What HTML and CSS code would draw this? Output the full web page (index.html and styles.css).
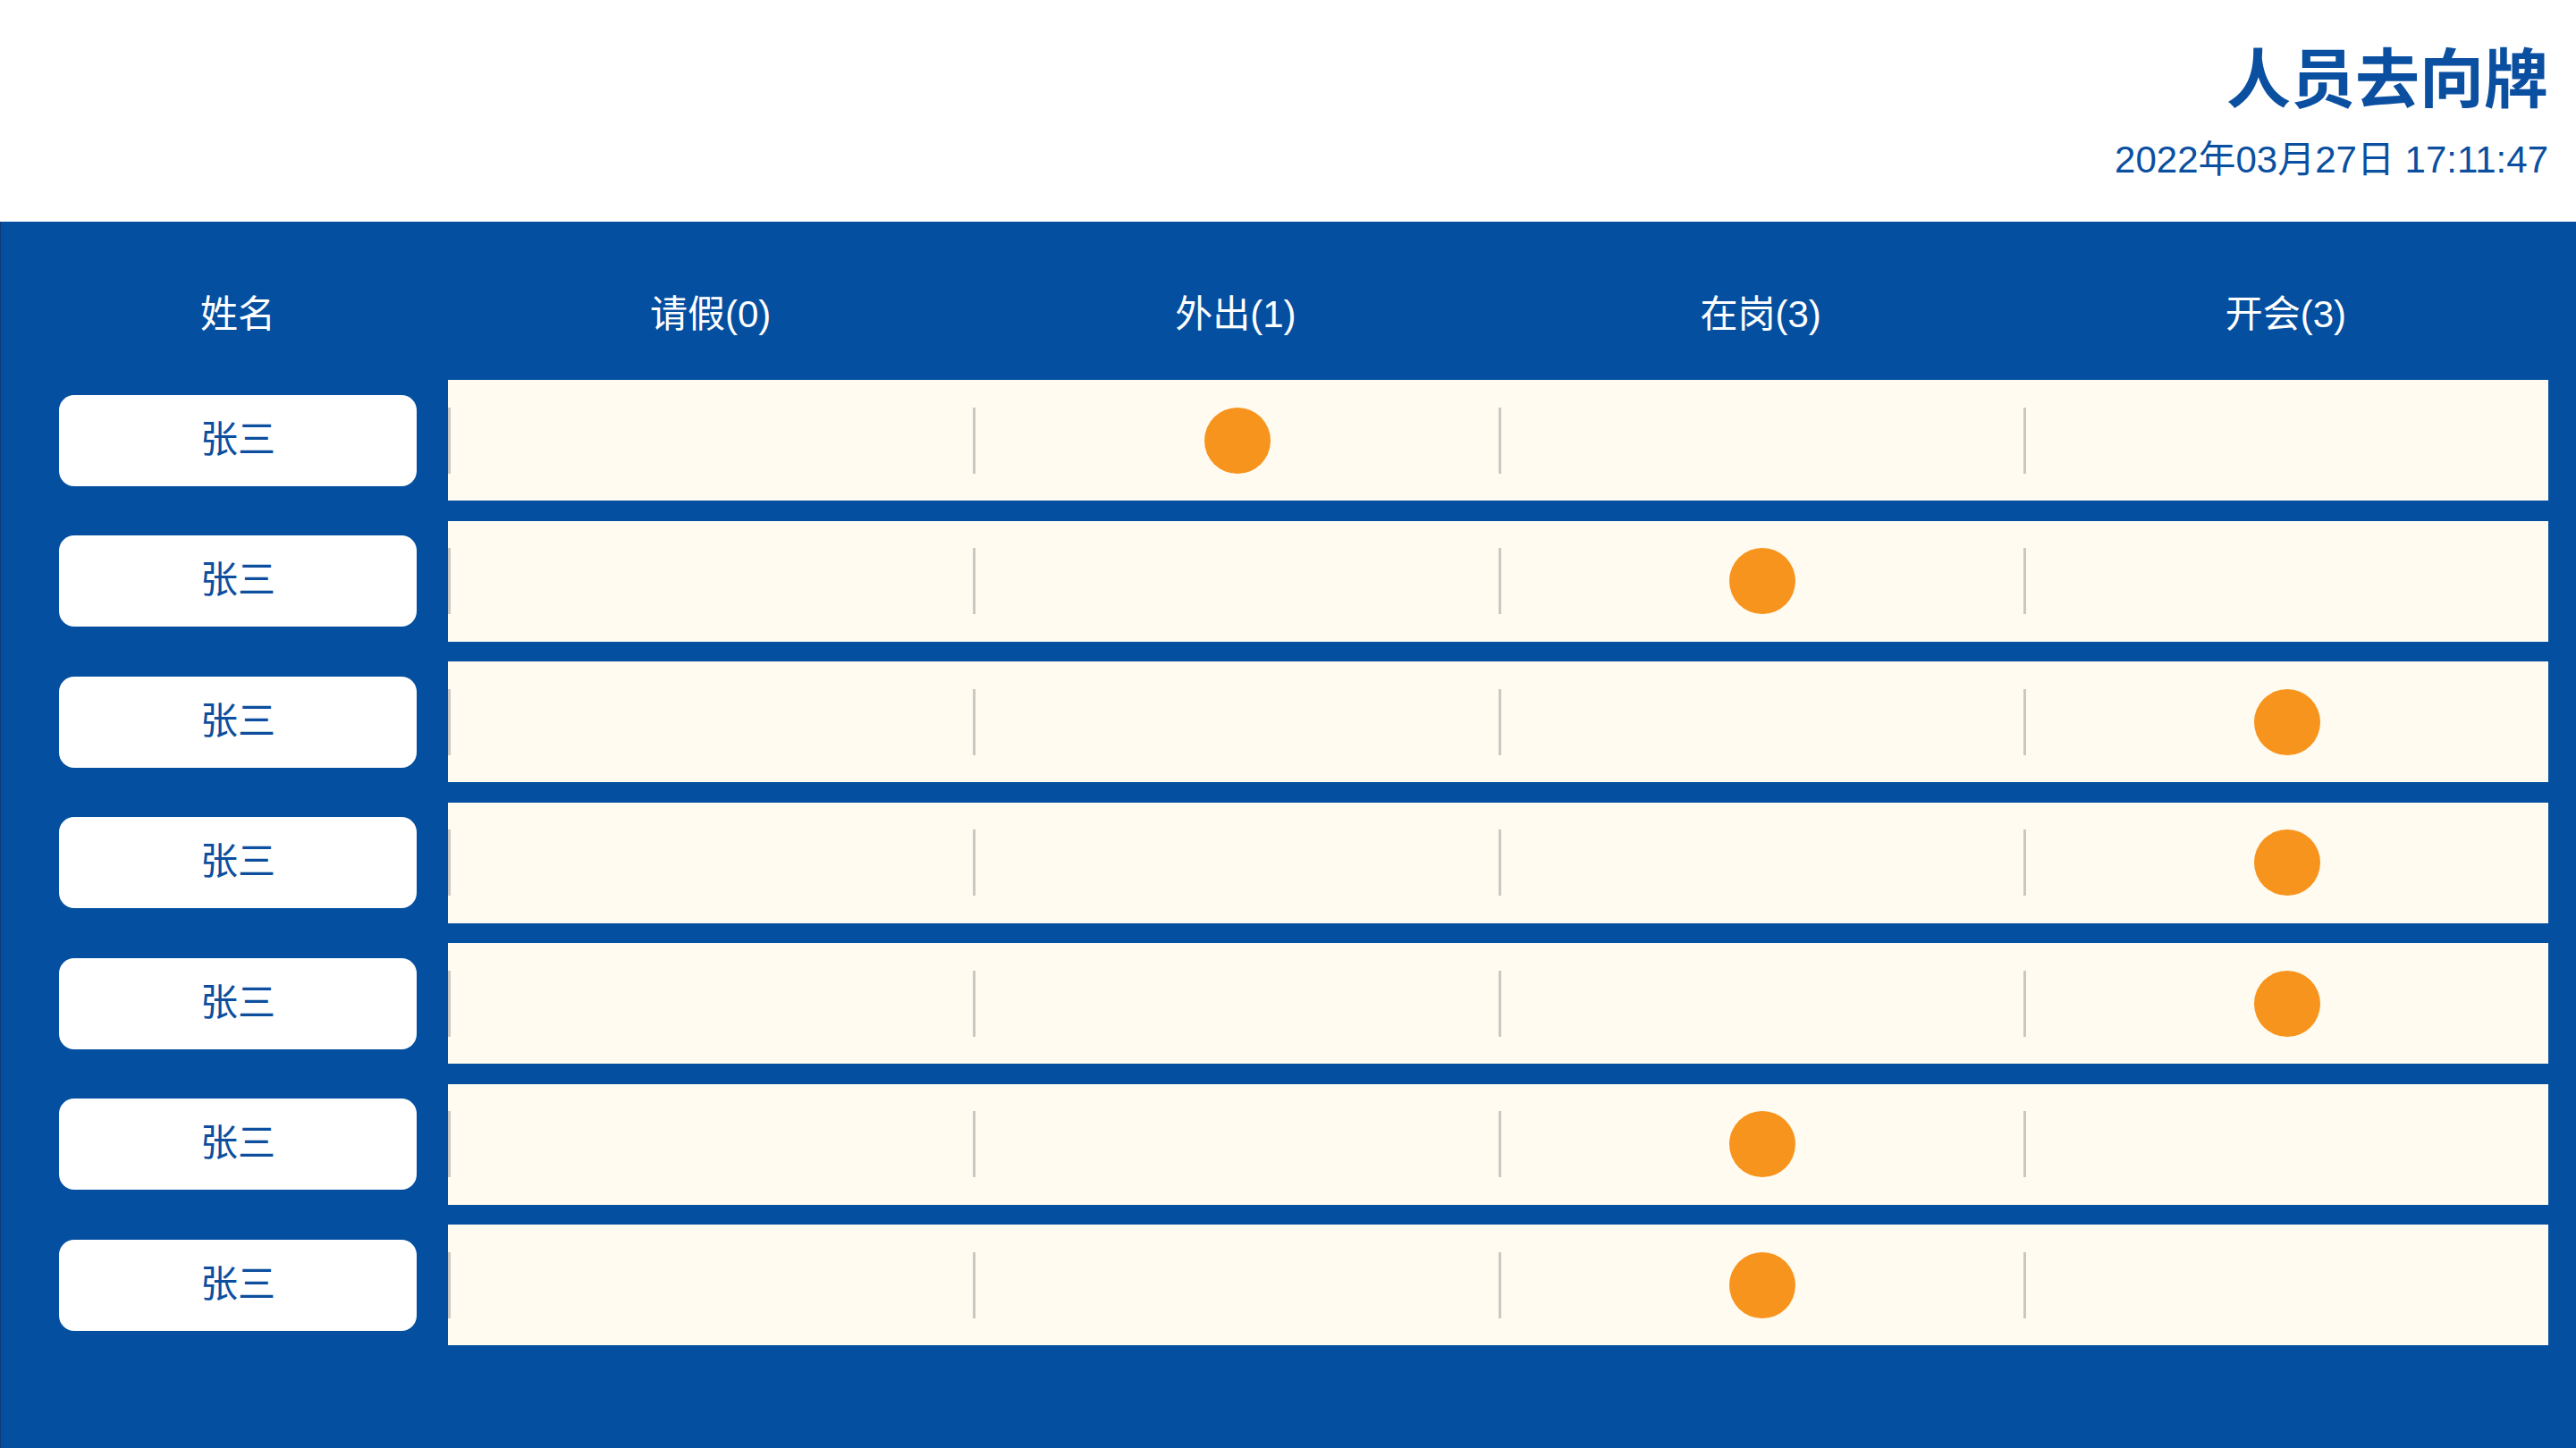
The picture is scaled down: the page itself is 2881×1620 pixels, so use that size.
FILE: index.html
```html
<!DOCTYPE html>
<html lang="zh-CN">
<head>
<meta charset="utf-8">
<title>人员去向牌</title>
<link rel="stylesheet" href="styles.css">
</head>
<body>
<div class="page">
  <header class="top">
    <h1 class="title">人员去向牌</h1>
    <div class="clock">2022年03月27日 17:11:47</div>
  </header>
  <main class="board">
    <div class="head-row">
      <div class="hname">姓名</div>
      <div class="hcols">
        <div>请假(0)</div>
        <div>外出(1)</div>
        <div>在岗(3)</div>
        <div>开会(3)</div>
      </div>
    </div>
    <div class="rows">
      <div class="row">
        <div class="name">张三</div>
        <div class="track">
          <div class="cell"></div>
          <div class="cell"><span class="dot"></span></div>
          <div class="cell"></div>
          <div class="cell"></div>
        </div>
      </div>
      <div class="row">
        <div class="name">张三</div>
        <div class="track">
          <div class="cell"></div>
          <div class="cell"></div>
          <div class="cell"><span class="dot"></span></div>
          <div class="cell"></div>
        </div>
      </div>
      <div class="row">
        <div class="name">张三</div>
        <div class="track">
          <div class="cell"></div>
          <div class="cell"></div>
          <div class="cell"></div>
          <div class="cell"><span class="dot"></span></div>
        </div>
      </div>
      <div class="row">
        <div class="name">张三</div>
        <div class="track">
          <div class="cell"></div>
          <div class="cell"></div>
          <div class="cell"></div>
          <div class="cell"><span class="dot"></span></div>
        </div>
      </div>
      <div class="row">
        <div class="name">张三</div>
        <div class="track">
          <div class="cell"></div>
          <div class="cell"></div>
          <div class="cell"></div>
          <div class="cell"><span class="dot"></span></div>
        </div>
      </div>
      <div class="row">
        <div class="name">张三</div>
        <div class="track">
          <div class="cell"></div>
          <div class="cell"></div>
          <div class="cell"><span class="dot"></span></div>
          <div class="cell"></div>
        </div>
      </div>
      <div class="row">
        <div class="name">张三</div>
        <div class="track">
          <div class="cell"></div>
          <div class="cell"></div>
          <div class="cell"><span class="dot"></span></div>
          <div class="cell"></div>
        </div>
      </div>
    </div>
  </main>
</div>
</body>
</html>
```

FILE: styles.css
```css
* { box-sizing: border-box; margin: 0; padding: 0; }

html, body {
  width: 2881px;
  height: 1620px;
  background: #ffffff;
  overflow: hidden;
}

body {
  font-family: "Liberation Sans", "Noto Sans CJK SC", sans-serif;
}

.page {
  display: flex;
  flex-direction: column;
  height: 1620px;
}

.top {
  height: 248px;
  padding: 53px 31px 0 0;
  display: flex;
  flex-direction: column;
  align-items: flex-end;
  color: #0b4fa0;
}

.title {
  font-size: 72px;
  line-height: 72px;
  font-weight: 700;
}

.clock {
  margin-top: 33px;
  font-size: 42px;
  line-height: 42px;
}

.board {
  flex: 1;
  background: #044fa0;
  border-left: 1px solid #0c3c78;
  padding: 83px 31px 0 65px;
}

.head-row {
  display: flex;
  gap: 35px;
  color: #ffffff;
  font-size: 42px;
  line-height: 42px;
  margin-bottom: 52px;
}

.hname {
  width: 400px;
  text-align: center;
}

.hcols {
  flex: 1;
  display: grid;
  grid-template-columns: repeat(4, 1fr);
  text-align: center;
}

.rows {
  display: flex;
  flex-direction: column;
  gap: 22.5px;
}

.row {
  display: flex;
  align-items: center;
  gap: 35px;
  height: 135px;
}

.name {
  width: 400px;
  height: 102px;
  padding-bottom: 2px;
  background: #ffffff;
  border-radius: 17px;
  display: flex;
  align-items: center;
  justify-content: center;
  color: #0d4f9e;
  font-size: 42px;
  line-height: 42px;
}

.track {
  flex: 1;
  height: 135px;
  background: #fffbf0;
  display: grid;
  grid-template-columns: repeat(4, 1fr);
}

.cell {
  display: flex;
  align-items: center;
  justify-content: center;
  padding-left: 4px;
  background: linear-gradient(#c9c8c2, #c9c8c2) left center / 3px 74px no-repeat;
}

.dot {
  width: 74px;
  height: 74px;
  border-radius: 50%;
  background: #f7941e;
}
```
